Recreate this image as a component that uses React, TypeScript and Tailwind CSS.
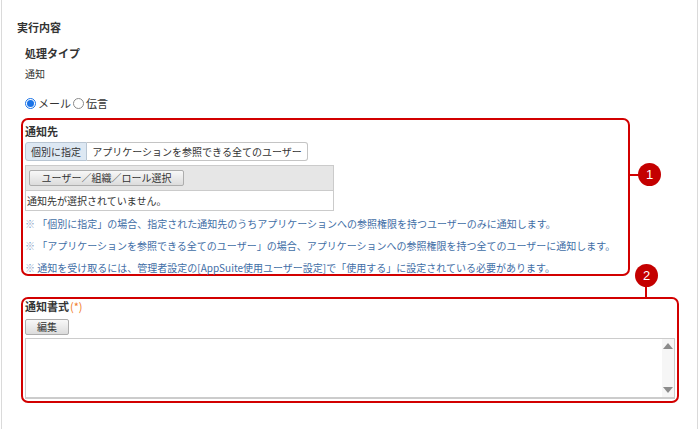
import React from "react";

const notes = [
  "「個別に指定」の場合、指定された通知先のうちアプリケーションへの参照権限を持つユーザーのみに通知します。",
  "「アプリケーションを参照できる全てのユーザー」の場合、アプリケーションへの参照権限を持つ全てのユーザーに通知します。",
  "通知を受け取るには、管理者設定の[AppSuite使用ユーザー設定]で「使用する」に設定されている必要があります。",
];

function Radio({ checked, label }: { checked?: boolean; label: string }) {
  return (
    <label className="flex items-center gap-[2px]">
      <span
        className={`flex h-[11px] w-[11px] items-center justify-center rounded-full border ${
          checked ? "border-[#1a73e8]" : "border-[#8a8a8a]"
        }`}
      >
        {checked && <span className="h-[7px] w-[7px] rounded-full bg-[#1a73e8]" />}
      </span>
      <span>{label}</span>
    </label>
  );
}

function Badge({ n }: { n: number }) {
  return (
    <span className="flex h-[23px] w-[23px] items-center justify-center rounded-full bg-[#c40000] text-[13px] leading-none text-white font-['Liberation_Sans',sans-serif]">
      {n}
    </span>
  );
}

export default function App() {
  return (
    <div className="relative h-[429px] w-[700px] overflow-hidden bg-white text-[10px] text-[#333] font-['Noto_Sans_CJK_JP','Noto_Sans',sans-serif]">
      <div className="ml-[1px] h-full w-[697px] border-x border-[#dadada]">
        {/* header block */}
        <div className="pl-[15px] pt-[19px] text-[11px] font-bold leading-[16px]">実行内容</div>
        <div className="pl-[23px] pt-[10px] text-[11px] font-bold leading-[16px]">処理タイプ</div>
        <div className="pl-[23px] pt-[5px] leading-[16px]">通知</div>
        <div className="flex items-center gap-[2px] pl-[23px] pt-[13px] text-[11px] leading-[16px]">
          <Radio checked label="メール" />
          <Radio label="伝言" />
        </div>

        {/* 1. 通知先 */}
        <div className="relative ml-[19px] mt-[7px] h-[158px] w-[609px] rounded-[7px] border-2 border-[#d20000] pl-[2px]">
          <div className="pt-[3px] text-[11px] font-bold leading-[16px]">通知先</div>
          <div className="mt-[3px] flex h-[19px] text-[10px] leading-none">
            <span className="flex w-[62px] items-center justify-center rounded-l-[3px] border border-[#b9c6d3] bg-[#dde8f3]">個別に指定</span>
            <span className="flex w-[221px] items-center justify-center rounded-r-[3px] border border-l-0 border-[#c4c4c4] bg-white">
              アプリケーションを参照できる全てのユーザー
            </span>
          </div>
          <div className="mt-[4px] w-[309px] border border-[#cbcbcb]">
            <div className="flex h-[24px] items-center bg-[#e6e6e6] pl-[3px]">
              <button className="h-[16px] w-[155px] rounded-[2px] border border-[#adadad] bg-gradient-to-b from-[#f8f8f8] to-[#dcdcdc] text-[10px] leading-none text-[#333]">
                ユーザー／組織／ロール選択
              </button>
            </div>
            <div className="flex h-[20px] items-center border-t border-[#cbcbcb] pl-[1px]">通知先が選択されていません。</div>
          </div>
          <div className="mt-[6px] flex flex-col gap-[8px]">
            {notes.map((t, i) => (
              <p key={i} className="leading-[14px] text-[#3f6ea6]">
                <span className="text-[#8ea6c6]">※</span> {t}
              </p>
            ))}
          </div>
          <div className="absolute left-[607px] top-[54px] h-[2px] w-[10px] bg-[#d20000]" />
          <div className="absolute left-[615px] top-[43px]">
            <Badge n={1} />
          </div>
        </div>

        {/* 2. 通知書式 */}
        <div className="relative ml-[19px] mt-[21px] h-[106px] w-[658px] rounded-[7px] border-2 border-[#d20000] pl-[2px]">
          <div className="text-[11px] font-bold leading-[14px]">
            通知書式<span className="ml-[1px] font-normal text-[#f07a2a]">(*)</span>
          </div>
          <button className="mt-[6px] h-[16px] w-[44px] rounded-[2px] border border-[#adadad] bg-gradient-to-b from-[#f8f8f8] to-[#dcdcdc] text-[10px] leading-none text-[#333]">
            編集
          </button>
          <div className="mt-[3px] flex h-[61px] w-[650px] border border-b-2 border-[#cccccc]">
            <div className="flex-1" />
            <div className="flex w-[12px] flex-col items-center justify-between bg-[#f6f6f6] py-[4px]">
              <span className="h-0 w-0 border-x-[5px] border-b-[6px] border-x-transparent border-b-[#8c8c8c]" />
              <span className="h-0 w-0 border-x-[5px] border-t-[6px] border-x-transparent border-t-[#8c8c8c]" />
            </div>
          </div>
          <div className="absolute -top-[12px] left-[622px] h-[10px] w-[2px] bg-[#d20000]" />
          <div className="absolute -top-[35px] left-[612px]">
            <Badge n={2} />
          </div>
        </div>
      </div>
    </div>
  );
}
